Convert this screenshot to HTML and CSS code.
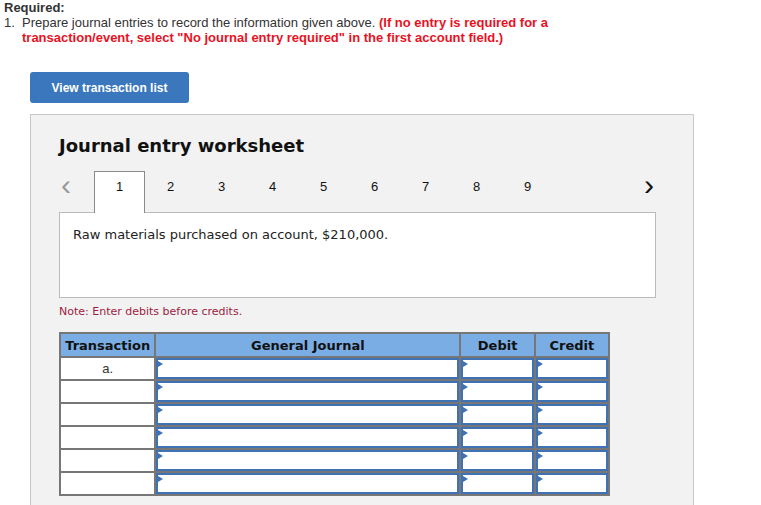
FILE: index.html
```html
<!DOCTYPE html>
<html lang="en">
<head>
    <meta charset="UTF-8">
    <title>Journal entry worksheet</title>
    <link rel="stylesheet" href="styles.css">
</head>
<body>
    <div class="required">
        <div class="req-title">Required:</div>
        <div class="req-item">
            <span class="req-num">1.</span>
            <span>Prepare journal entries to record the information given above. <b class="req-note">(If no entry is required for a transaction/event, select "No journal entry required" in the first account field.)</b></span>
        </div>
    </div>

    <button class="btn-list" type="button">View transaction list</button>

    <div class="worksheet">
        <h2 class="ws-title">Journal entry worksheet</h2>

        <div class="tabs">
            <span class="arrow arrow-left">&lsaquo;</span>
            <div class="tab active">1</div>
            <div class="tab">2</div>
            <div class="tab">3</div>
            <div class="tab">4</div>
            <div class="tab">5</div>
            <div class="tab">6</div>
            <div class="tab">7</div>
            <div class="tab">8</div>
            <div class="tab">9</div>
            <span class="arrow arrow-right">&rsaquo;</span>
        </div>

        <div class="desc">Raw materials purchased on account, $210,000.</div>

        <p class="note">Note: Enter debits before credits.</p>

        <table class="journal">
            <thead>
                <tr>
                    <th class="c-trans">Transaction</th>
                    <th class="c-gj">General Journal</th>
                    <th class="c-debit">Debit</th>
                    <th class="c-credit">Credit</th>
                </tr>
            </thead>
            <tbody>
                <tr><td class="trans">a.</td><td><div class="field"></div></td><td><div class="field"></div></td><td><div class="field"></div></td></tr>
                <tr><td class="trans"></td><td><div class="field"></div></td><td><div class="field"></div></td><td><div class="field"></div></td></tr>
                <tr><td class="trans"></td><td><div class="field"></div></td><td><div class="field"></div></td><td><div class="field"></div></td></tr>
                <tr><td class="trans"></td><td><div class="field"></div></td><td><div class="field"></div></td><td><div class="field"></div></td></tr>
                <tr><td class="trans"></td><td><div class="field"></div></td><td><div class="field"></div></td><td><div class="field"></div></td></tr>
                <tr><td class="trans"></td><td><div class="field"></div></td><td><div class="field"></div></td><td><div class="field"></div></td></tr>
            </tbody>
        </table>
    </div>
</body>
</html>
```

FILE: styles.css
```css
body {
    margin: 0;
    font-family: "Liberation Sans", Arial, sans-serif;
    color: #333;
    overflow: hidden;
}
.required {
    padding: 0 4px;
    font-size: 13px;
    line-height: 15px;
}
.req-title {
    font-weight: bold;
}
.req-item {
    display: flex;
    width: 556px;
}
.req-num {
    width: 18px;
    flex: none;
}
.req-note {
    color: #e8121f;
}
.btn-list {
    display: block;
    margin: 27px 0 0 30px;
    width: 159px;
    height: 31px;
    border: none;
    border-radius: 3px;
    background-color: #3a77bc;
    color: #fff;
    font-family: "Liberation Sans", Arial, sans-serif;
    font-size: 12px;
    font-weight: bold;
    cursor: pointer;
}
.worksheet {
    margin: 11px 0 0 30px;
    width: 634px;
    height: 400px;
    padding: 0 0 0 28px;
    background-color: #f2f2f2;
    border: 1px solid #c8c8c8;
    font-family: "DejaVu Sans", Verdana, sans-serif;
}
.ws-title {
    margin: 0;
    padding-top: 20px;
    font-size: 18px;
    color: #111;
}
.tabs {
    display: flex;
    align-items: flex-end;
    margin-top: 15px;
    height: 41px;
    width: 597px;
    font-family: "Liberation Sans", Arial, sans-serif;
    font-size: 13px;
    color: #111;
}
.tab {
    box-sizing: border-box;
    width: 51px;
    height: 41px;
    padding-top: 7px;
    text-align: center;
    border: 1px solid transparent;
    border-bottom: none;
}
.tab.active {
    background-color: #fff;
    border-color: #8a8a8a;
    height: 42px;
    margin-bottom: -1px;
    position: relative;
    z-index: 1;
}
.arrow {
    align-self: flex-start;
    font-size: 30px;
    line-height: 26px;
    padding-top: 1px;
}
.arrow-left {
    width: 33px;
    padding-left: 2px;
    color: #999;
}
.arrow-right {
    margin-left: auto;
    margin-right: 2px;
    color: #111;
}
.desc {
    box-sizing: border-box;
    width: 597px;
    height: 86px;
    padding: 14px 13px;
    background-color: #fff;
    border: 1px solid #bbb;
    font-size: 13px;
    color: #222;
}
.note {
    margin: 7px 0 0;
    font-size: 11px;
    color: #9e1b3e;
}
.journal {
    margin-top: 14px;
    border-collapse: collapse;
    table-layout: fixed;
    width: 551px;
    font-size: 13px;
}
.journal th {
    height: 22px;
    padding: 0;
    background-color: #7aade3;
    border: 2px solid #777;
    color: #111;
}
.c-trans { width: 93px; }
.c-gj { width: 302px; }
.c-debit { width: 72px; }
.c-credit { width: 72px; }
.journal td {
    height: 21px;
    padding: 0;
    background-color: #fff;
    border: 2px solid #777;
}
.journal td.trans {
    text-align: center;
    font-family: "Liberation Sans", Arial, sans-serif;
    color: #333;
}
.field {
    position: relative;
    box-sizing: border-box;
    height: 21px;
    border: 2px solid #3e72b4;
}
.field::before {
    content: "";
    position: absolute;
    left: 0;
    top: 1px;
    border-left: 5px solid #3e72b4;
    border-top: 3px solid transparent;
    border-bottom: 3px solid transparent;
}
```
